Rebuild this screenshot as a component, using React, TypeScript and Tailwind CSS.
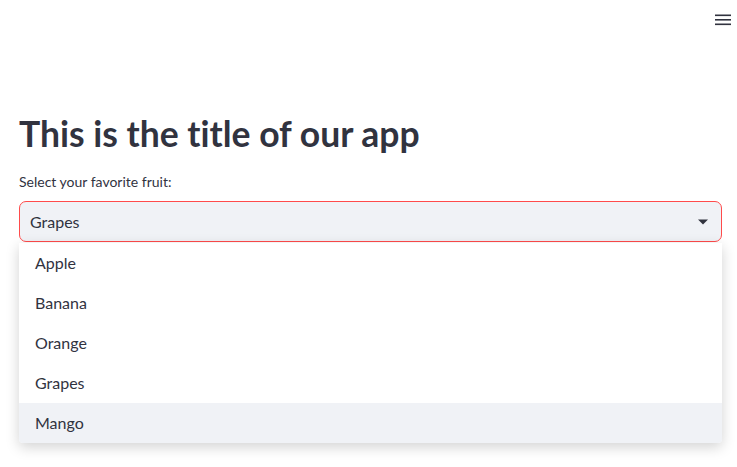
import React, { useState } from "react";

const fruits = ["Apple", "Banana", "Orange", "Grapes", "Mango"];

export default function App() {
  const [selected] = useState("Grapes");
  const [hovered] = useState("Mango");

  return (
    <div
      className="min-h-screen w-full bg-white text-[#31333f] [font-variant-ligatures:none]"
      style={{ fontFamily: "Lato, 'Noto Sans', sans-serif" }}
    >
      {/* Top bar */}
      <header className="flex h-[40px] items-center justify-end">
        <button type="button" className="flex h-[28px] w-[28px] items-center justify-center" title="Menu">
          <svg width="16" height="12" viewBox="0 0 16 12">
            <rect x="0" y="0.5" width="16" height="1.6" fill="#31333f" />
            <rect x="0" y="5" width="16" height="1.6" fill="#31333f" />
            <rect x="0" y="9.5" width="16" height="1.6" fill="#31333f" />
          </svg>
        </button>
      </header>

      <main className="pl-[19px] pr-[15px] pt-[70px]">
        <h1 className="text-[35.5px] font-bold leading-[48px]">This is the title of our app</h1>

        <label className="mt-[15px] block text-[14px] leading-[18px]">Select your favorite fruit:</label>

        <div className="relative mt-[10px]">
          <div className="flex h-[41px] items-center justify-between rounded-[7px] border border-[#ff4b4b] bg-[#f0f2f6] pl-[10px] pr-[12px]">
            <span className="text-[16px]">{selected}</span>
            <svg width="12" height="8" viewBox="0 0 12 8">
              <path d="M1 1.5h10L6 6.5z" fill="#31333f" />
            </svg>
          </div>

          {/* Dropdown menu */}
          <ul className="absolute left-0 right-0 top-[42px] overflow-hidden rounded-b-[4px] bg-white shadow-[0_4px_14px_rgba(0,0,0,0.18)]">
            {fruits.map((f) => (
              <li
                key={f}
                className={`flex h-[40px] items-center pl-[16px] text-[16px] ${f === hovered ? "bg-[#f0f2f6]" : ""}`}
              >
                {f}
              </li>
            ))}
          </ul>
        </div>
      </main>
    </div>
  );
}
